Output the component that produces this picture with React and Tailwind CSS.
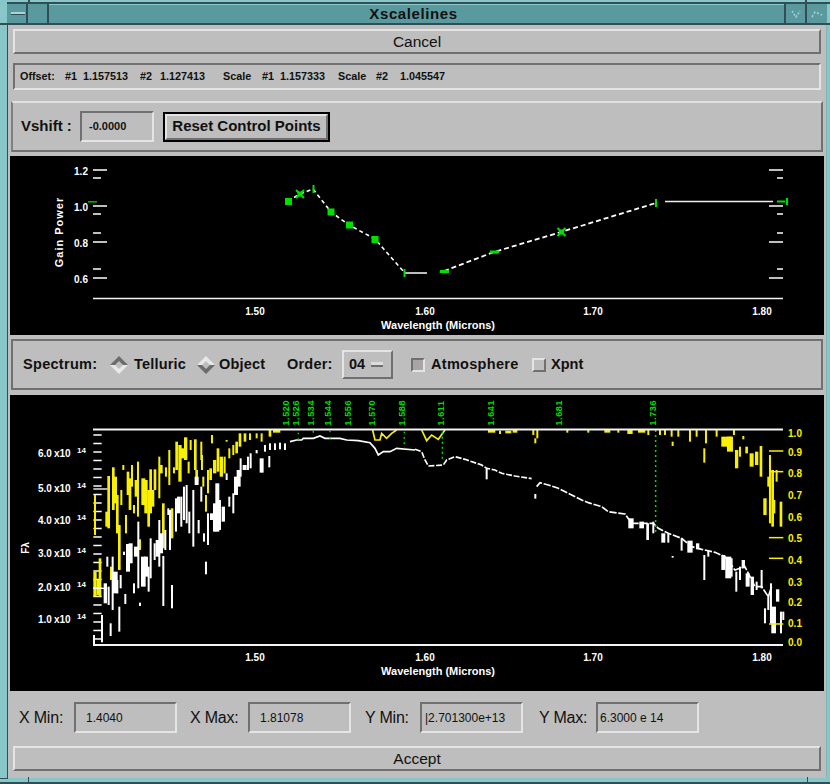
const sans = { fontFamily: '"Liberation Sans", Arial, sans-serif' }

// spectrum traces, [x, y1, y2, width] in 3x coordinates
const whiteLeft = [
  [316,580,640,8],[326,590,645,4],[338,500,660,4],[346,545,610,12],[352,570,610,4],[358,650,725,4],[332,700,738,4],[362,555,595,4],[376,612,642,4],[322,500,530,4],[372,485,495,4],[384,462,545,10],[392,460,520,10],[402,580,610,4],[408,470,500,10],[415,395,595,4],[430,500,590,12],[438,500,560,10],[446,530,605,4],[452,445,565,4],[464,460,510,4],[472,450,500,8],[478,390,530,4],[484,430,490,8],[490,498,648,4],[496,420,480,4],[510,360,480,4],[516,585,655,4],[505,355,375,4],[528,325,425,4],[536,320,370,8],[544,320,410,4],[552,290,390,4],[560,285,400,4],[568,365,430,4],[580,300,470,4],[590,260,285,10],[596,390,430,4],[604,290,335,4],[612,430,455,4],[618,515,553,4],[624,370,465,4],[636,370,390,10],[644,340,425,8],[652,280,425,10],[660,330,420,4],[670,350,395,8],[680,250,270,4],[688,320,350,4],[700,310,370,4],[708,260,315,10],[716,240,290,10],[722,205,260,4],[734,225,240,10],[744,200,240,4],[752,190,235,4],[770,180,190,4],[785,205,248,10],[808,198,232,4],[420,638,648,4],[795,165,185,4],[810,160,180,4],[825,160,180,4],[840,158,178,4],[855,160,180,4],[306,675,757,4],[282,735,765,4],
]
const whiteRight = [
  [215,235,268,4],[361,312,326,4],[698,400,450,6],[715,395,430,4],[745,430,458,10],[760,430,458,4],[800,445,482,4],[825,452,488,14],[848,460,478,8],[868,495,570,4],[880,480,500,4],[925,495,540,10],[940,500,565,16],[950,505,560,4],[964,545,605,4],[975,530,570,4],[985,510,535,8],[998,550,590,10],[1012,560,615,8],[1025,575,600,4],[1040,540,595,4],[1050,655,700,4],[1060,615,660,4],[1068,580,700,4],[1076,650,730,12],[1088,598,635,8],[1098,665,730,4],[1105,665,690,4],[773,498,503,4],[648,385,415,14],[680,395,415,12],
]
const yellowLeft = [
  [285,315,435,4],[300,505,620,6],[285,545,620,8],[295,570,615,8],[320,365,410,6],[326,258,415,6],[333,530,570,4],[340,232,360,6],[346,260,340,8],[352,315,430,6],[358,405,540,6],[364,300,345,4],[370,225,240,4],[378,375,430,4],[384,245,315,6],[390,265,360,6],[396,225,290,4],[402,345,370,4],[408,270,320,6],[414,215,380,4],[420,448,480,4],[430,265,345,10],[438,270,370,8],[446,300,410,6],[452,238,370,6],[458,300,350,8],[465,238,300,6],[478,200,325,4],[484,225,250,6],[490,340,475,6],[498,232,260,4],[508,180,285,4],[516,355,445,6],[522,232,250,4],[530,155,240,6],[540,165,275,8],[548,175,205,10],[557,142,210,8],[566,215,250,4],[572,150,180,4],[586,148,240,6],[590,240,285,6],[604,155,210,4],[606,195,240,4],[610,260,290,4],[618,315,365,4],[624,240,310,4],[632,235,270,6],[636,135,160,4],[644,210,250,8],[654,175,245,6],[664,200,260,8],[674,200,250,4],[680,150,155,4],[688,175,205,4],[700,165,195,4],[710,155,190,6],[720,130,170,6],[735,130,155,6],[750,130,150,4],[770,130,145,4],[785,130,155,4],[810,120,140,6],[830,120,128,20],
]
const yellowRight = [
  [230,120,128,20],[255,122,132,4],[280,122,130,16],[300,120,128,12],[355,120,135,4],[367,120,145,4],[361,145,160,4],[457,120,128,4],[520,120,128,4],[577,120,128,16],[610,120,128,4],[645,120,132,14],[680,120,128,20],[700,120,135,4],[735,120,135,4],[750,120,135,4],[770,120,140,4],[773,155,168,4],[790,120,140,4],[825,120,155,4],[845,120,140,4],[873,120,160,4],[868,175,218,4],[905,120,140,4],[935,140,170,30],[945,140,185,16],[957,120,135,4],[965,180,235,8],[975,170,200,4],[985,138,148,4],[995,170,190,6],[1010,190,230,10],[1025,185,225,8],[1038,168,260,6],[1050,325,375,8],[1060,260,290,4],[1065,195,400,4],[1073,240,410,6],[1085,240,275,4],[1078,330,370,4],[1098,335,410,6],
]
const curveLeft = '870,155 890,150 905,150 910,145 940,145 960,138 975,145 1020,145 1040,150 1075,152 1110,158 1125,175 1135,195 1150,185 1170,185 1190,175 1245,180'
const curveRight1 = '0,178 20,185 30,210 40,228 85,225 95,210 120,200 150,208 200,225 215,235 240,240 260,250 300,258 350,266'
const curveRight2 = '365,290 375,278 400,285 430,295 470,315 500,330 520,338 560,350 580,365 630,372 650,400 690,400 715,400 730,415 760,430 800,445 830,470 860,478 900,487 930,500 960,540 990,530 1020,590 1040,590 1060,620 1070,590'

const leftTicks = Array.from({ length: 25 }, (_, i) => 135 + i * 25.5)

const lines = [
  [286,'1.520'],[296,'1.526'],[311,'1.534'],[328,'1.544'],[348,'1.556'],[372,'1.570'],[402,'1.588'],[441,'1.611'],[491,'1.641'],[559,'1.681'],[653,'1.736'],
]

const yellowLabels = [[433,'1.0'],[452,'0.9'],[473,'0.8'],[495,'0.7'],[517,'0.6'],[538,'0.5'],[560,'0.4'],[582,'0.3'],[602,'0.2'],[623,'0.1'],[642,'0.0']]
const fluxLabels = [[457,'6.0'],[492,'5.0'],[524,'4.0'],[557,'3.0'],[591,'2.0'],[623,'1.0']]

function Bars({ items, color }) {
  return items.map(([x, a, b, w], i) => (
    <rect key={i} x={x - w / 2 - 1} y={a} width={w + 2} height={b - a} fill={color} />
  ))
}

function Ticks({ x1, x2, ys, color = '#fff', width = 1.5 }) {
  return ys.map((y, i) => <line key={i} x1={x1} x2={x2} y1={y} y2={y} stroke={color} strokeWidth={width} />)
}

function AxisText({ x, y, children, anchor = 'middle', fill = '#fff', size = 10, spacing = 0 }) {
  return (
    <text x={x} y={y} textAnchor={anchor} fill={fill} fontSize={size} letterSpacing={spacing} fontWeight="700" fontFamily='"Liberation Sans", Arial, sans-serif'>
      {children}
    </text>
  )
}

function XLabels({ y }) {
  return (
    <>
      <AxisText x={255} y={y}>1.50</AxisText>
      <AxisText x={425} y={y}>1.60</AxisText>
      <AxisText x={593} y={y}>1.70</AxisText>
      <AxisText x={762} y={y}>1.80</AxisText>
      <AxisText x={438} y={y + 14} size={11}>Wavelength (Microns)</AxisText>
    </>
  )
}

function Square({ x, y }) {
  return <rect x={x - 3.5} y={y - 3.5} width="7" height="7" fill="#00e000" />
}

function Cross({ x, y }) {
  return (
    <>
      <path d={`M${x - 4} ${y - 4}L${x + 4} ${y + 4}M${x + 4} ${y - 4}L${x - 4} ${y + 4}`} stroke="#00e000" strokeWidth="2" />
      <rect x={x - 2.5} y={y - 2.5} width="5" height="5" fill="#00e000" />
    </>
  )
}

function GainPlot() {
  return (
    <svg viewBox="10 156 814 179" width="814" height="179" className="block">
      <Ticks x1={93} x2={107} ys={[170, 206, 242, 278]} />
      <Ticks x1={93} x2={101} ys={[178, 214, 233, 269]} />
      <Ticks x1={769} x2={783} ys={[170, 206, 242, 278]} />
      <Ticks x1={777} x2={783} ys={[178, 214, 233, 269]} />
      <line x1="93" x2="783" y1="298.5" y2="298.5" stroke="#f4f4f4" strokeWidth="1.6" />
      <polyline points="288,201 300,194 313,189 331,212 349,225 375,239 404,272" fill="none" stroke="#fff" strokeWidth="1.6" strokeDasharray="4 3" />
      <polyline points="444,271 494,252 561,232 656,203" fill="none" stroke="#fff" strokeWidth="1.8" strokeDasharray="5 3" />
      <line x1="405" x2="427" y1="273" y2="273" stroke="#eee" strokeWidth="1.6" />
      <line x1="665" x2="773" y1="201.5" y2="201.5" stroke="#eee" strokeWidth="1.6" />
      <g>
        <Square x={288.5} y={201.5} />
        <Cross x={300} y={194} />
        <rect x="312.5" y="185" width="2" height="8" fill="#00e000" />
        <Square x={331} y={212} />
        <Square x={349.5} y={225} />
        <Square x={375} y={239.5} />
        <rect x="403.5" y="269" width="2" height="8" fill="#00e000" />
        <rect x="440" y="270" width="9" height="3" fill="#00e000" />
        <rect x="490" y="250.5" width="9" height="3" fill="#00e000" />
        <Cross x={561.5} y={232} />
        <rect x="655" y="199" width="2" height="8" fill="#00e000" />
        <rect x="777" y="200.5" width="8" height="2" fill="#00e000" />
        <rect x="786" y="198" width="2" height="7" fill="#00e000" />
        <rect x="88" y="201" width="9" height="1.6" fill="#00b000" />
      </g>
      <AxisText x={81} y={175}>1.2</AxisText>
      <AxisText x={81} y={211}>1.0</AxisText>
      <AxisText x={81} y={247}>0.8</AxisText>
      <AxisText x={81} y={283}>0.6</AxisText>
      <XLabels y={315} />
      <g transform="translate(63 232) rotate(-90)">
        <AxisText x={0} y={0} size={11} spacing={1}>Gain Power</AxisText>
      </g>
    </svg>
  )
}

function SpectrumPlot() {
  return (
    <svg viewBox="10 395 814 296" width="814" height="296" className="block">
      <g transform="translate(0 390) scale(0.3333)">
        <Ticks x1={280} x2={305} ys={leftTicks} width={4.5} />
        <Bars items={yellowLeft} color="#f8f000" />
        <Bars items={whiteLeft} color="#fff" />
        <polyline points={curveLeft} fill="none" stroke="#fff" strokeWidth="5" />
        <polyline points="1118,120 1125,150 1140,150 1145,130 1160,145 1175,130 1190,120" fill="none" stroke="#f8f000" strokeWidth="5" />
        <rect x="280" y="295" width="42" height="4" fill="#fff" />
        <rect x="280" y="593" width="42" height="4" fill="#fff" />
        <line x1="1213" x2="1213" y1="125" y2="175" stroke="#00e000" strokeWidth="4" strokeDasharray="5 11" />
        <line x1="895" x2="895" y1="128" y2="155" stroke="#00e000" strokeWidth="4" strokeDasharray="5 12" />
        <line x1="940" x2="940" y1="122" y2="128" stroke="#00e000" strokeWidth="4" />
        <line x1="990" x2="990" y1="122" y2="148" stroke="#00e000" strokeWidth="4" strokeDasharray="5 16" />
      </g>
      <g transform="translate(415 390) scale(0.3333)">
        <Bars items={yellowRight} color="#f8f000" />
        <Bars items={whiteRight} color="#fff" />
        <polyline points={curveRight1} fill="none" stroke="#fff" strokeWidth="5" strokeDasharray="18 5" />
        <polyline points={curveRight2} fill="none" stroke="#fff" strokeWidth="5" strokeDasharray="22 5" />
        <polyline points="20,120 35,152 50,135 70,148 90,120" fill="none" stroke="#f8f000" strokeWidth="5" />
        <line x1="82" x2="82" y1="125" y2="215" stroke="#00e000" strokeWidth="4" strokeDasharray="6 9" />
        <line x1="722" x2="722" y1="120" y2="430" stroke="#00e000" strokeWidth="4.5" strokeDasharray="6 9" />
        <Ticks x1={1062} x2={1105} ys={[183, 245, 443, 505, 702]} color="#f8f000" width={4.5} />
      </g>
      <line x1="93" x2="783" y1="429.5" y2="429.5" stroke="#f4f4f4" strokeWidth="1.8" />
      <line x1="93" x2="783" y1="645" y2="645" stroke="#f4f4f4" strokeWidth="1.8" />
      {lines.map(([x, t]) => (
        <g key={x} transform={`translate(${x + 3} 425.5) rotate(-90)`}>
          <text fill="#00e000" fontSize="9" fontWeight="700" fontFamily='"Liberation Sans", Arial, sans-serif' letterSpacing="0.6">{t}</text>
        </g>
      ))}
      {fluxLabels.map(([y, t]) => (
        <g key={y}>
          <AxisText x={38} y={y} anchor="start">{t}</AxisText>
          <AxisText x={54} y={y} anchor="start">x10</AxisText>
          <AxisText x={77} y={y - 4} anchor="start" size={8}>14</AxisText>
        </g>
      ))}
      <g transform="translate(29 548) rotate(-90)">
        <AxisText x={0} y={0} size={10}>F&#955;</AxisText>
      </g>
      {yellowLabels.map(([y, t]) => (
        <AxisText key={y} x={795} y={y + 4} fill="#f8f000" size={10}>{t}</AxisText>
      ))}
      <XLabels y={661} />
    </svg>
  )
}

function CommandButton({ children }) {
  return (
    <div className="h-[25px] mx-[5px] flex items-center justify-center pt-[1px] border-2 border-t-[#e4e4e4] border-l-[#e4e4e4] border-b-[#707070] border-r-[#707070] text-[15.5px] text-[#111]">
      {children}
    </div>
  )
}

function Field({ label, labelWidth, children }) {
  return (
    <>
      <span className={`${labelWidth} text-[16px] tracking-[-0.2px] whitespace-nowrap`}>{label}</span>
      <div className="w-[103px] h-[31px] flex items-center pl-[10px] border-2 border-t-[#707070] border-l-[#707070] border-b-[#e4e4e4] border-r-[#e4e4e4] text-[12px] whitespace-nowrap overflow-hidden">
        {children}
      </div>
    </>
  )
}

function Diamond({ sunken }) {
  const top = sunken ? '#6c6c6c' : '#e8e8e8'
  const bottom = sunken ? '#e8e8e8' : '#6c6c6c'
  return (
    <svg viewBox="0 0 18 18" width="18" height="18" className="shrink-0">
      <path d="M0 9 9 0l9 9h-5L9 5 5 9Z" fill={top} />
      <path d="M0 9 9 18l9-9h-5l-4 4-4-4Z" fill={bottom} />
    </svg>
  )
}

export default function App() {
  return (
    <div className="w-[830px] h-[784px] relative overflow-hidden flex flex-col bg-[#88c6ca] text-[#111]" style={sans}>
      {/* frame corner marks */}
      <div className="absolute left-0 top-[23px] w-[8px] h-[2px] bg-[#2f4f54]" />
      <div className="absolute left-[28px] top-0 w-[2px] h-[3px] bg-[#2f4f54]" />
      <div className="absolute left-[805px] top-0 w-[2px] h-[3px] bg-[#2f4f54]" />
      <div className="absolute left-0 bottom-[5px] w-[8px] h-[1px] bg-[#2f4f54]" />
      <div className="absolute left-[28px] bottom-[2px] w-[1px] h-[5px] bg-[#2f4f54]" />
      <div className="absolute left-[807px] bottom-[2px] w-[1px] h-[5px] bg-[#2f4f54]" />

      {/* title bar */}
      <div className="h-[25px] pt-[2px] shrink-0">
        <div className="h-[23px] flex ml-[7px] bg-[#5a9a9f] border-y-2 border-[#2f4f54]">
          <div className="w-[21px] border-r-2 border-[#2f4f54] flex items-center pl-[4px]">
            <div className="w-[14px] h-[3px] bg-[#a6d6d8] border-b border-[#2f4f54]" />
          </div>
          <div className="w-[21px] border-r-2 border-[#2f4f54]" />
          <div className="flex-1 flex items-center justify-center border-t border-[#8cc8cc] text-[15px] font-bold tracking-[0.6px] pr-[6px]">
            Xscalelines
          </div>
          <div className="w-[21px] border-l-2 border-[#2f4f54] flex items-center justify-center">
            <svg width="10" height="10" viewBox="0 0 10 10"><path d="M1 2 5 8 9 2" fill="none" stroke="#9cd4d6" strokeWidth="1.6" strokeDasharray="2 1.5" /></svg>
          </div>
          <div className="w-[22px] border-l-2 border-[#2f4f54] flex items-center justify-center">
            <svg width="12" height="10" viewBox="0 0 12 10"><path d="M1 8 4 3 11 6" fill="none" stroke="#9cd4d6" strokeWidth="1.6" strokeDasharray="2 2" /></svg>
          </div>
          <div className="w-[3px] bg-[#88c6ca]" />
        </div>
      </div>

      <div className="flex flex-1 min-h-0">
        <div className="w-[8px] shrink-0 border-r border-[#2f4f54]" />
        <div className="w-[818px] bg-[#bebebe] flex flex-col pt-[4px]">
          <CommandButton>Cancel</CommandButton>

          <div className="h-[27px] mt-[9px] mx-[5px] flex items-center pl-[5px] border-2 border-t-[#707070] border-l-[#707070] border-b-[#e4e4e4] border-r-[#e4e4e4] text-[10.8px] font-bold whitespace-pre">
            <span className="w-[45px]">Offset:</span>
            <span className="w-[18px]">#1</span>
            <span className="w-[57px]">1.157513</span>
            <span className="w-[20px]">#2</span>
            <span className="w-[63px]">1.127413</span>
            <span className="w-[39px]">Scale</span>
            <span className="w-[18px]">#1</span>
            <span className="w-[58px]">1.157333</span>
            <span className="w-[38px]">Scale</span>
            <span className="w-[24px]">#2</span>
            <span>1.045547</span>
          </div>

          <div className="h-[51px] mt-[11px] mx-[3px] flex items-center pl-[8px] border-2 border-t-[#e0e0e0] border-l-[#808080] border-b-[#707070] border-r-[#707070]">
            <span className="w-[59px] text-[15px] font-bold whitespace-nowrap">Vshift :</span>
            <div className="w-[74px] h-[31px] flex items-center pl-[7px] border-2 border-t-[#707070] border-l-[#707070] border-b-[#e4e4e4] border-r-[#e4e4e4] text-[11px] font-bold whitespace-nowrap">
              -0.0000
            </div>
            <div className="w-[167px] h-[30px] ml-[9px] border-2 border-black">
              <div className="h-full flex items-center justify-center border-2 border-t-[#e4e4e4] border-l-[#e4e4e4] border-b-[#707070] border-r-[#707070] text-[15px] font-bold whitespace-nowrap">
                Reset Control Points
              </div>
            </div>
          </div>

          <div className="h-[179px] mt-[4px] mx-[2px] bg-black">
            <GainPlot />
          </div>

          <div className="h-[51px] mt-[4px] mx-[3px] flex items-center pl-[10px] border-2 border-[#707070] text-[14.5px] font-bold whitespace-nowrap">
            <span className="w-[87px] tracking-[0.3px]">Spectrum:</span>
            <Diamond sunken />
            <span className="ml-[6px] w-[63px] tracking-[0.2px]">Telluric</span>
            <Diamond />
            <span className="ml-[4px] w-[68px] tracking-[0.2px]">Object</span>
            <span className="w-[55px] tracking-[0.2px]">Order:</span>
            <div className="w-[51px] h-[29px] flex items-center pl-[5px] gap-[6px] border-2 border-t-[#e4e4e4] border-l-[#e4e4e4] border-b-[#707070] border-r-[#707070]">
              04
              <div className="w-[12px] h-[5px] bg-[#dcdcdc] border-b-2 border-[#707070]" />
            </div>
            <div className="w-[14px] h-[14px] ml-[18px] bg-[#a8a4a8] border-2 border-t-[#707070] border-l-[#707070] border-b-[#e4e4e4] border-r-[#e4e4e4]" />
            <span className="ml-[6px] w-[101px] tracking-[0.3px]">Atmosphere</span>
            <div className="w-[14px] h-[14px] border-2 border-t-[#e4e4e4] border-l-[#e4e4e4] border-b-[#707070] border-r-[#707070]" />
            <span className="ml-[5px]">Xpnt</span>
          </div>

          <div className="h-[296px] mt-[5px] mx-[2px] bg-black">
            <SpectrumPlot />
          </div>

          <div className="h-[31px] mt-[11px] flex items-center pl-[11px]">
            <Field label="X Min:" labelWidth="w-[55px]">1.4040</Field>
            <Field label="X Max:" labelWidth="w-[58px] ml-[13px]">1.81078</Field>
            <Field label="Y Min:" labelWidth="w-[55px] ml-[14px]"><span className="-ml-[7px]">|2.701300e+13</span></Field>
            <Field label="Y Max:" labelWidth="w-[57px] ml-[16px]"><span className="-ml-[8px]">6.3000 e 14</span></Field>
          </div>

          <div className="mt-[13px]">
            <CommandButton>Accept</CommandButton>
          </div>
        </div>
        <div className="w-[4px] shrink-0 border-l border-[#7fb4b8]" />
      </div>

      <div className="h-[6px] shrink-0 border-b-2 border-[#2f4f54]" />
    </div>
  )
}
